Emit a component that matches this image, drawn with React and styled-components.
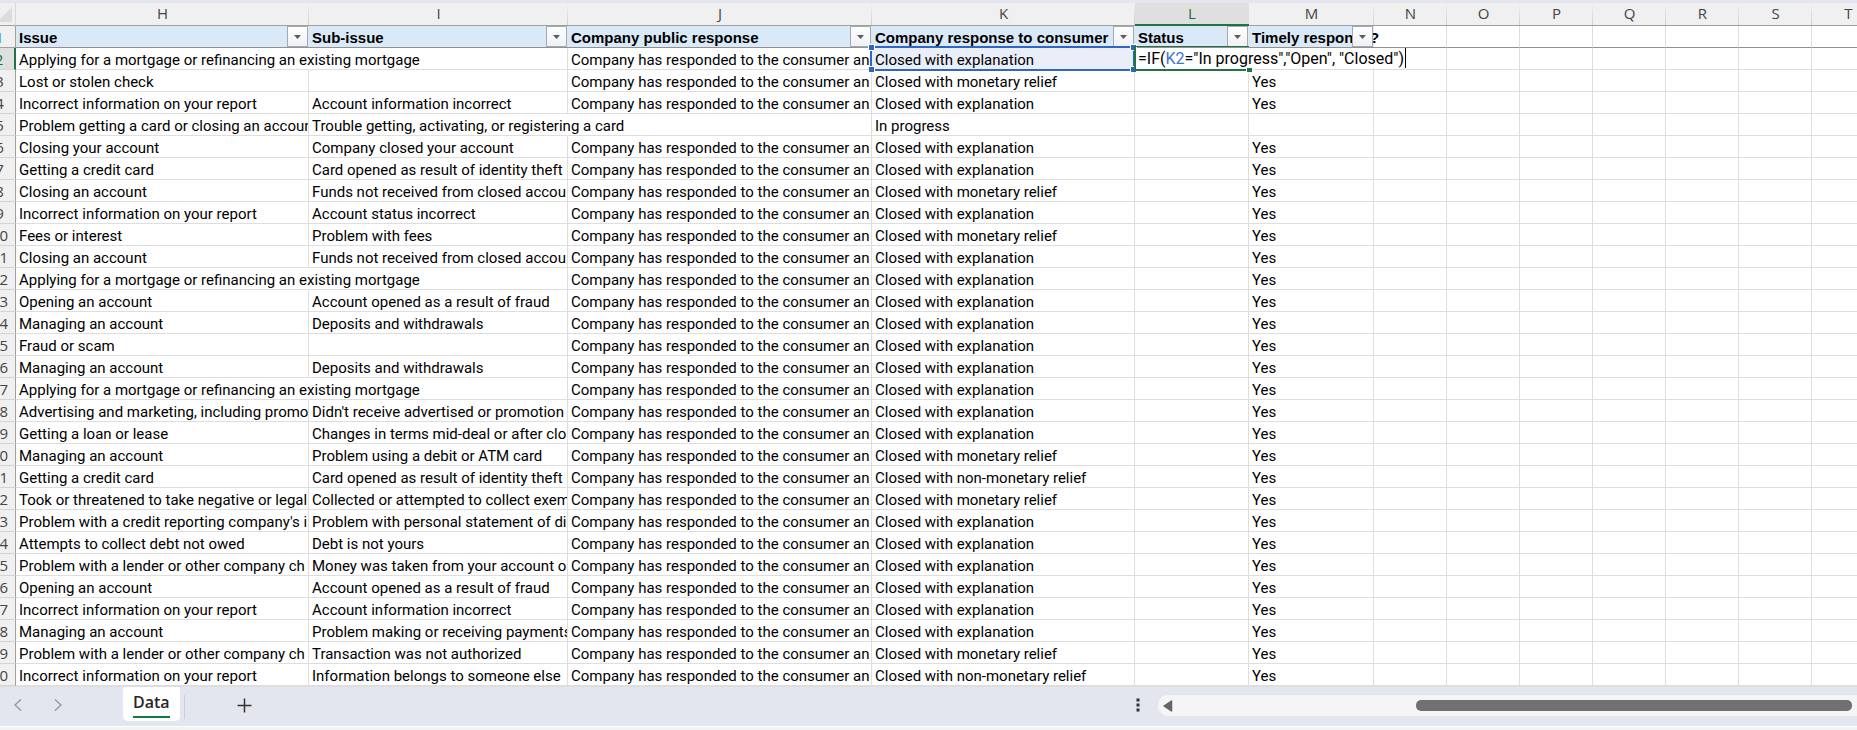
import React from "react";
import styled, { createGlobalStyle, css } from "styled-components";

const GlobalStyle = createGlobalStyle`
  *, *::before, *::after { box-sizing: border-box; }
  body {
    margin: 0;
    background: #f3f3f3;
    color: #000;
    font-family: Roboto, "Liberation Sans", sans-serif;
    font-size: 15px;
  }
`;

const colors = {
  chrome: "#e3e6ee",
  heading: "#f0f0f0",
  headingActive: "#dfdfdf",
  line: "#dedede",
  frame: "#a0a0a0",
  tableHead: "#dae9f8",
  green: "#217346",
  blue: "#2f66c5",
  blueFill: "#e9eef8",
};

const headingFont = `"Open Sans", "Noto Sans", sans-serif`;

const Workbook = styled.main`
  overflow: hidden;
  border-top: 3px solid ${colors.chrome};
`;

const Sheet = styled.div`
  overflow: hidden;
  background: #fff;
`;

/* The row-number gutter is partly scrolled out on the left. */
const Grid = styled.table`
  table-layout: fixed;
  width: 0;
  margin-left: -16px;
  border-collapse: separate;
  border-spacing: 0;
`;

const Column = styled.col`
  width: ${(p) => p.$width}px;
`;

const Row = styled.tr`
  height: 22px;
`;

const ColumnHeading = styled.th`
  height: 23px;
  padding: 0 0 2px;
  border-bottom: 1px solid ${colors.frame};
  background: linear-gradient(${colors.heading}, #cfcfcf) right / 1px 100% no-repeat ${colors.heading};
  color: #444;
  font: 400 15px/20px ${headingFont};
  text-align: center;
  ${(p) =>
    p.$active &&
    css`
      padding-bottom: 1px;
      border-bottom: 2px solid ${colors.green};
      background: ${colors.headingActive};
      color: #0f703b;
    `}
`;

const Corner = styled.td`
  height: 23px;
  padding: 0 3px 3px 0;
  border-right: 1px solid #d8d8d8;
  border-bottom: 1px solid ${colors.frame};
  background: ${colors.heading};
  vertical-align: bottom;
`;

const CornerMark = styled.svg`
  display: block;
  margin-left: auto;
`;

const RowHeading = styled.th`
  height: 22px;
  padding: 0;
  border-right: 1px solid ${colors.frame};
  border-bottom: 1px solid #d4d4d4;
  background: ${colors.heading};
  color: #444;
  font: 400 15px/20px ${headingFont};
  text-align: center;
  ${(p) =>
    p.$filtered &&
    css`
      border-bottom-color: ${colors.frame};
      color: #3a96ee;
    `}
  ${(p) =>
    p.$active &&
    css`
      border-right: 2px solid ${colors.green};
      background: ${colors.headingActive};
      color: #0f703b;
    `}
`;

const Cell = styled.td`
  position: ${(p) => (p.$anchor ? "relative" : "static")};
  height: 22px;
  padding: 3px 0 0 3px;
  overflow: ${(p) => (p.$spill || p.$anchor ? "visible" : "hidden")};
  border-right: 1px solid ${(p) => (p.$spill ? "transparent" : colors.line)};
  border-bottom: 1px solid ${colors.line};
  line-height: 18px;
  white-space: nowrap;
`;

const FieldHeading = styled.th`
  height: 22px;
  padding: 0;
  border-bottom: 1px solid #919191;
  background: ${colors.tableHead};
  text-align: left;
`;

const FieldBody = styled.div`
  position: relative;
  padding: 3px 0 0 3px;
  font-family: "Liberation Sans", Arial, sans-serif;
  font-weight: 700;
  line-height: 18px;
  white-space: nowrap;
`;

const EmptyHeading = styled.td`
  height: 22px;
  border-right: 1px solid ${colors.line};
  border-bottom: 1px solid #919191;
`;

const FilterButton = styled.button`
  position: absolute;
  top: 0;
  right: 1px;
  display: flex;
  align-items: center;
  justify-content: center;
  width: 21px;
  height: 21px;
  padding: 0;
  border: 1px solid #a3a9b3;
  background: linear-gradient(#fff, #f0f1f4);
`;

const Reference = styled.span`
  position: absolute;
  inset: -2px -1px -2px -2px;
  border: 2px solid ${colors.blue};
  pointer-events: none;
`;

const ReferenceFill = styled.span`
  position: absolute;
  inset: 0;
  padding: 3px 0 0 3px;
  background: ${colors.blueFill};
`;

const Handle = styled.span`
  position: absolute;
  width: 7px;
  height: 7px;
  border: 1px solid #fff;
  background: ${(p) => (p.$green ? colors.green : colors.blue)};
  ${(p) => (p.$bottom ? "bottom: -4px;" : "top: -4px;")}
  ${(p) => (p.$right ? "right: -4px;" : "left: -4px;")}
`;

const ActiveFrame = styled.span`
  position: absolute;
  inset: -2px -1px -2px -1px;
  border: solid ${colors.green};
  border-width: 1px 0 2px 2px;
`;

const Formula = styled.div`
  position: absolute;
  top: 0;
  left: 1px;
  height: 20px;
  padding: 0 1px 0 2px;
  border-right: 1px solid #000;
  background: #fff;
  font-size: 16px;
  line-height: 22px;
  white-space: nowrap;
  outline: none;
`;

const FormulaRef = styled.span`
  color: #3f73d1;
`;

const SheetBar = styled.footer`
  display: flex;
  align-items: flex-start;
  height: 41px;
  border-top: 1px solid #dedede;
  border-bottom: 1px solid #fff;
  background: ${colors.chrome};
`;

const BarButton = styled.button`
  display: flex;
  align-items: center;
  justify-content: center;
  width: ${(p) => p.$width}px;
  height: 36px;
  padding: 0;
  border: 0;
  background: none;
`;

const Tabs = styled.nav`
  display: flex;
  padding: 0 3px 0 43px;
`;

const Tab = styled.button`
  padding: 3px 10px;
  border: 0;
  border-radius: 0 0 5px 5px;
  background: #fff;
  color: #262626;
  font: 600 16px/24px ${headingFont};
`;

const TabLabel = styled.span`
  display: block;
  padding-bottom: 2px;
  border-bottom: 2px solid #107c41;
`;

const Divider = styled.span`
  width: 1px;
  height: 24px;
  margin: 8px 41px 0 1px;
  background: #cdcfd6;
`;

const ScrollArea = styled.div`
  display: flex;
  flex: 0 0 739px;
  align-items: flex-start;
  margin-left: auto;
`;

const Track = styled.div`
  display: flex;
  flex: 1;
  align-items: center;
  height: 21px;
  margin-top: 8px;
  padding: 0 5px 0 4px;
  border-radius: 10px 0 0 10px;
  background: #f5f5f5;
`;

const ArrowButton = styled.button`
  display: flex;
  padding: 0;
  border: 0;
  background: none;
`;

const Thumb = styled.div`
  width: 436px;
  height: 11px;
  margin-left: auto;
  border-radius: 5px;
  background: #707070;
`;

const columns = [
  ["H", 293], ["I", 259], ["J", 304], ["K", 263], ["L", 114], ["M", 125], ["N", 73],
  ["O", 73], ["P", 73], ["Q", 73], ["R", 73], ["S", 73], ["T", 73],
];

const fields = [
  "Issue", "Sub-issue", "Company public response",
  "Company response to consumer", "Status", "Timely response?",
];

const PUBLIC = "Company has responded to the consumer an";
const EXPLAINED = "Closed with explanation";
const MONETARY = "Closed with monetary relief";
const NON_MONETARY = "Closed with non-monetary relief";
const MORTGAGE = "Applying for a mortgage or refinancing an existing mortgage";

/* issue, sub-issue, response to consumer */
const complaints = [
  [MORTGAGE, "", EXPLAINED],
  ["Lost or stolen check", "", MONETARY],
  ["Incorrect information on your report", "Account information incorrect", EXPLAINED],
  ["Problem getting a card or closing an accoun", "Trouble getting, activating, or registering a card", "In progress"],
  ["Closing your account", "Company closed your account", EXPLAINED],
  ["Getting a credit card", "Card opened as result of identity theft", EXPLAINED],
  ["Closing an account", "Funds not received from closed accou", MONETARY],
  ["Incorrect information on your report", "Account status incorrect", EXPLAINED],
  ["Fees or interest", "Problem with fees", MONETARY],
  ["Closing an account", "Funds not received from closed accou", EXPLAINED],
  [MORTGAGE, "", EXPLAINED],
  ["Opening an account", "Account opened as a result of fraud", EXPLAINED],
  ["Managing an account", "Deposits and withdrawals", EXPLAINED],
  ["Fraud or scam", "", EXPLAINED],
  ["Managing an account", "Deposits and withdrawals", EXPLAINED],
  [MORTGAGE, "", EXPLAINED],
  ["Advertising and marketing, including promo", "Didn't receive advertised or promotion", EXPLAINED],
  ["Getting a loan or lease", "Changes in terms mid-deal or after clo", EXPLAINED],
  ["Managing an account", "Problem using a debit or ATM card", MONETARY],
  ["Getting a credit card", "Card opened as result of identity theft", NON_MONETARY],
  ["Took or threatened to take negative or legal", "Collected or attempted to collect exem", MONETARY],
  ["Problem with a credit reporting company's i", "Problem with personal statement of di", EXPLAINED],
  ["Attempts to collect debt not owed", "Debt is not yours", EXPLAINED],
  ["Problem with a lender or other company ch", "Money was taken from your account o", EXPLAINED],
  ["Opening an account", "Account opened as a result of fraud", EXPLAINED],
  ["Incorrect information on your report", "Account information incorrect", EXPLAINED],
  ["Managing an account", "Problem making or receiving payments", EXPLAINED],
  ["Problem with a lender or other company ch", "Transaction was not authorized", MONETARY],
  ["Incorrect information on your report", "Information belongs to someone else", NON_MONETARY],
];

function FieldRow() {
  return (
    <Row>
      <RowHeading scope="row" $filtered>1</RowHeading>
      {fields.map((name) => (
        <FieldHeading key={name} scope="col">
          <FieldBody>
            {name}
            <FilterButton type="button" aria-label={`Filter ${name}`}>
              <svg width="7" height="4" viewBox="0 0 7 4" aria-hidden="true">
                <path d="M0 0h7L3.500 4z" fill="#5b5b5b" />
              </svg>
            </FilterButton>
          </FieldBody>
        </FieldHeading>
      ))}
      {columns.slice(6).map(([letter]) => <EmptyHeading key={letter} />)}
    </Row>
  );
}

function ReferencedCell({ children }) {
  return (
    <Cell $anchor>
      <ReferenceFill>{children}</ReferenceFill>
      <Reference>
        <Handle />
        <Handle $right />
        <Handle $bottom />
        <Handle $right $bottom />
      </Reference>
    </Cell>
  );
}

function EditingCell() {
  return (
    <Cell $anchor>
      <ActiveFrame>
        <Handle $green $right $bottom />
      </ActiveFrame>
      <Formula role="textbox" aria-label="Formula in L2" contentEditable suppressContentEditableWarning spellCheck={false}>
        =IF(<FormulaRef>K2</FormulaRef>="In progress","Open", "Closed")
      </Formula>
    </Cell>
  );
}

function ComplaintRow({ number, complaint }) {
  const [issue, subIssue, response] = complaint;
  const editing = number === 2;
  const open = response === "In progress";
  return (
    <Row>
      <RowHeading scope="row" $active={editing}>{number}</RowHeading>
      <Cell $spill={issue === MORTGAGE}>{issue}</Cell>
      <Cell $spill={open}>{subIssue}</Cell>
      <Cell>{open ? "" : PUBLIC}</Cell>
      {editing ? <ReferencedCell>{response}</ReferencedCell> : <Cell>{response}</Cell>}
      {editing ? <EditingCell /> : <Cell />}
      <Cell>{editing || open ? "" : "Yes"}</Cell>
      {columns.slice(6).map(([letter]) => <Cell key={letter} />)}
    </Row>
  );
}

function Chevron({ right }) {
  return (
    <svg width="8" height="12" viewBox="0 0 8 12" fill="none" stroke="#999" strokeWidth="1.500" aria-hidden="true">
      <path d={right ? "M1 0.500L7 6L1 11.500" : "M7 0.500L1 6L7 11.500"} />
    </svg>
  );
}

export default function App() {
  return (
    <>
      <GlobalStyle />
      <Workbook>
        <Sheet>
          <Grid>
            <colgroup>
              <Column $width={32} />
              {columns.map(([letter, width]) => <Column key={letter} $width={width} />)}
            </colgroup>
            <thead>
              <tr>
                <Corner>
                  <CornerMark width="15" height="15" viewBox="0 0 15 15" aria-hidden="true">
                    <path d="M15 0V15H0z" fill="#dcdcdc" />
                  </CornerMark>
                </Corner>
                {columns.map(([letter]) => (
                  <ColumnHeading key={letter} scope="col" $active={letter === "L"}>{letter}</ColumnHeading>
                ))}
              </tr>
            </thead>
            <tbody>
              <FieldRow />
              {complaints.map((complaint, i) => (
                <ComplaintRow key={i} number={i + 2} complaint={complaint} />
              ))}
            </tbody>
          </Grid>
        </Sheet>
        <SheetBar>
          <BarButton $width={36} type="button" aria-label="Previous sheet"><Chevron /></BarButton>
          <BarButton $width={44} type="button" aria-label="Next sheet"><Chevron right /></BarButton>
          <Tabs aria-label="Sheets">
            <Tab type="button" aria-current="page"><TabLabel>Data</TabLabel></Tab>
          </Tabs>
          <Divider />
          <BarButton $width={38} type="button" aria-label="New sheet">
            <svg width="15" height="15" viewBox="0 0 15 15" stroke="#333" strokeWidth="1.500" aria-hidden="true">
              <path d="M7.500 0.500V14.500M0.500 7.500H14.500" />
            </svg>
          </BarButton>
          <ScrollArea>
            <BarButton $width={40} type="button" aria-label="Resize scroll bar">
              <svg width="4" height="14" viewBox="0 0 4 14" fill="#333" aria-hidden="true">
                <path d="M0.500 0.500h3v3h-3zM0.500 5.500h3v3h-3zM0.500 10.500h3v3h-3z" />
              </svg>
            </BarButton>
            <Track>
              <ArrowButton type="button" aria-label="Scroll left">
                <svg width="11" height="12" viewBox="0 0 11 12" aria-hidden="true">
                  <path d="M9.500 1V11L2 6z" fill="#666" stroke="#666" strokeWidth="1.500" strokeLinejoin="round" />
                </svg>
              </ArrowButton>
              <Thumb role="scrollbar" aria-label="Horizontal scroll" aria-controls="root" aria-orientation="horizontal" aria-valuenow={100} />
            </Track>
          </ScrollArea>
        </SheetBar>
      </Workbook>
    </>
  );
}
